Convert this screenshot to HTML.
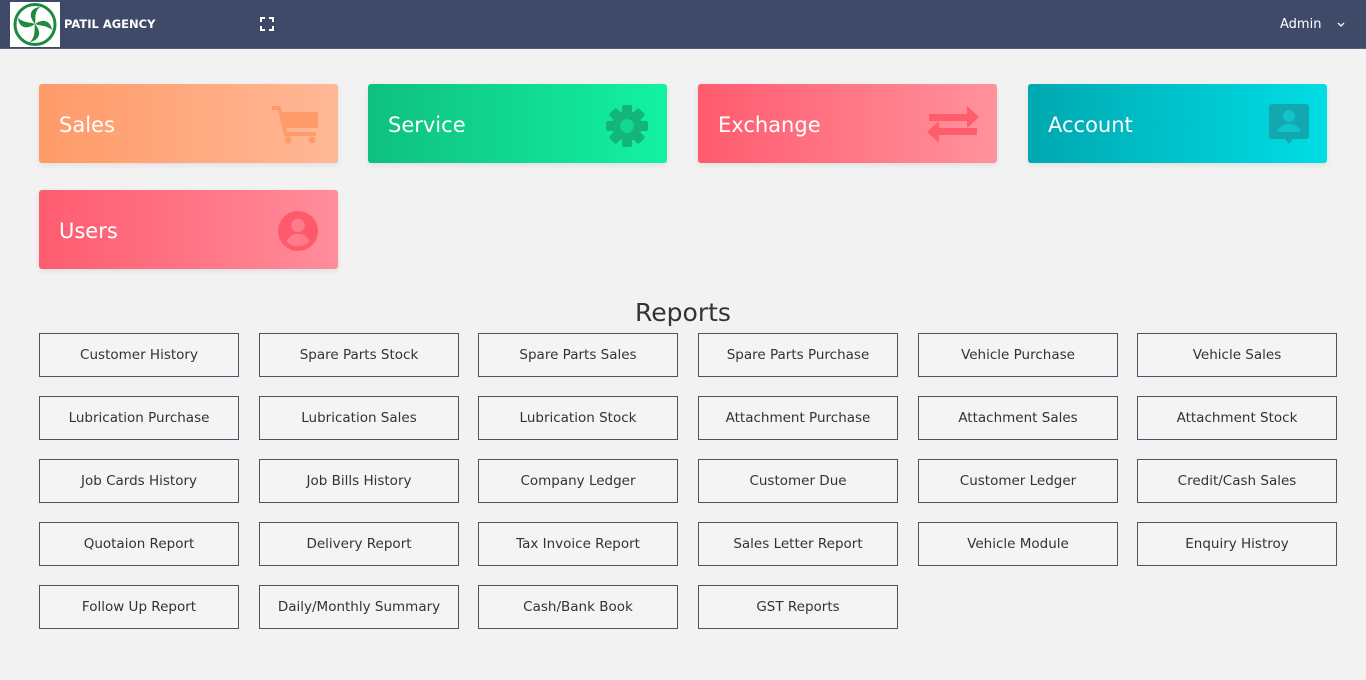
<!DOCTYPE html>
<html><head><meta charset="utf-8"><style>
*{box-sizing:border-box;margin:0;padding:0}
body{width:1366px;height:680px;background:#f2f2f2;font-family:"DejaVu Sans","Liberation Sans",sans-serif;position:relative;overflow:hidden}
.hdr{position:absolute;left:0;top:0;width:1366px;height:49px;background:#3e4a67;border-bottom:1px solid #56617a}
.logo{position:absolute;left:10px;top:2px;width:50px;height:45px;background:#fff}
.brand{position:absolute;left:64px;top:17px;color:#fff;font-weight:bold;font-size:11.5px;font-family:"DejaVu Sans",sans-serif}
.admin{position:absolute;left:1280px;top:17px;color:#fff;font-size:13px}
.card{position:absolute;width:299px;height:79px;border-radius:3px;color:#fff;font-size:21px;padding:29px 0 0 20px;box-shadow:0 2px 6px rgba(0,0,0,.08)}
.card svg{position:absolute;right:18px;top:20px}
.title{position:absolute;left:0;width:1366px;top:298px;text-align:center;font-size:25px;color:#333}
.b{position:absolute;width:200px;height:44px;border:1px solid #4a5468;background:#f4f4f4;color:#333;font-size:13.5px;text-align:center;line-height:42px}
</style></head><body>
<div class="hdr">
<div class="logo"><svg width="50" height="45" viewBox="0 0 50 45"><circle cx="25" cy="22.5" r="20" fill="#fff" stroke="#1e8a3e" stroke-width="3"/><g fill="#1e8a3e"><path d="M25 22 C18 14 20 6 30 5 C24 10 26 16 25 22Z"/><path d="M25 22 C33 16 41 19 42 28 C36 23 30 24 25 22Z"/><path d="M25 22 C32 30 30 38 20 40 C26 34 24 28 25 22Z"/><path d="M25 22 C17 28 9 26 8 16 C14 21 20 20 25 22Z"/></g></svg></div>
<div class="brand">PATIL AGENCY</div>
<svg style="position:absolute;left:260px;top:17px" width="14" height="14" viewBox="0 0 14 14" fill="none" stroke="#fff" stroke-width="2"><path d="M1 5V1H5M9 1H13V5M13 9V13H9M5 13H1V9"/></svg>
<div class="admin">Admin</div>
<svg style="position:absolute;left:1337px;top:22px" width="8" height="6" viewBox="0 0 8 6" fill="none" stroke="#fff" stroke-width="1.3"><path d="M1 1L4 4L7 1"/></svg>
</div>

<div class="card" style="left:39px;top:84px;background:linear-gradient(90deg,#ff9a68,#ffb896)">Sales<svg width="48" height="40" viewBox="0 0 48 40" fill="#ff9a6a"><path d="M0 2h8l2 6h36v16H14l1 4h29v4H12L6 6H0z"/><circle cx="16" cy="36" r="3.5"/><circle cx="40" cy="36" r="3.5"/></svg></div>
<div class="card" style="left:368px;top:84px;background:linear-gradient(90deg,#0fc07f,#12f2a2)">Service<svg width="44" height="44" viewBox="0 0 44 44" fill="#13b579"><g transform="translate(22 22)"><rect x="-5" y="-21" width="10" height="42" rx="2"/><rect x="-5" y="-21" width="10" height="42" rx="2" transform="rotate(45)"/><rect x="-5" y="-21" width="10" height="42" rx="2" transform="rotate(90)"/><rect x="-5" y="-21" width="10" height="42" rx="2" transform="rotate(135)"/><circle r="15"/><circle r="7" fill="#10d890"/></g></svg></div>
<div class="card" style="left:698px;top:84px;background:linear-gradient(90deg,#ff5b6f,#ff929c)">Exchange<svg width="52" height="40" viewBox="0 0 52 40" fill="#ff5c6c"><path d="M2 10h38V2l12 11-12 11v-7H2z"/><path d="M50 24H12v-7L0 28l12 11v-8h38z"/></svg></div>
<div class="card" style="left:1028px;top:84px;background:linear-gradient(90deg,#00a8b0,#00dde5)">Account<svg width="40" height="42" viewBox="0 0 40 42" fill="#13a8b0"><path d="M3 0h34a3 3 0 013 3v29a3 3 0 01-3 3H24l-4 5-4-5H3a3 3 0 01-3-3V3a3 3 0 013-3z"/><circle cx="20" cy="12" r="6" fill="#10c4cc"/><path d="M8 28c2-6 7-8 12-8s10 2 12 8z" fill="#10c4cc"/></svg></div>
<div class="card" style="left:39px;top:190px;background:linear-gradient(90deg,#ff5b6f,#ff8d9b)">Users<svg width="44" height="42" viewBox="0 0 44 44" fill="#ff5a6c"><circle cx="22" cy="22" r="21"/><circle cx="22" cy="16" r="7" fill="#ff7d8a"/><path d="M10 33c3-6 7-8 12-8s9 2 12 8c-3 3-7 5-12 5s-9-2-12-5z" fill="#ff7d8a"/></svg></div>

<div class="title">Reports</div>

<div class="b" style="left:39px;top:333px">Customer History</div>
<div class="b" style="left:259px;top:333px">Spare Parts Stock</div>
<div class="b" style="left:478px;top:333px">Spare Parts Sales</div>
<div class="b" style="left:698px;top:333px">Spare Parts Purchase</div>
<div class="b" style="left:918px;top:333px">Vehicle Purchase</div>
<div class="b" style="left:1137px;top:333px">Vehicle Sales</div>

<div class="b" style="left:39px;top:396px">Lubrication Purchase</div>
<div class="b" style="left:259px;top:396px">Lubrication Sales</div>
<div class="b" style="left:478px;top:396px">Lubrication Stock</div>
<div class="b" style="left:698px;top:396px">Attachment Purchase</div>
<div class="b" style="left:918px;top:396px">Attachment Sales</div>
<div class="b" style="left:1137px;top:396px">Attachment Stock</div>

<div class="b" style="left:39px;top:459px">Job Cards History</div>
<div class="b" style="left:259px;top:459px">Job Bills History</div>
<div class="b" style="left:478px;top:459px">Company Ledger</div>
<div class="b" style="left:698px;top:459px">Customer Due</div>
<div class="b" style="left:918px;top:459px">Customer Ledger</div>
<div class="b" style="left:1137px;top:459px">Credit/Cash Sales</div>

<div class="b" style="left:39px;top:522px">Quotaion Report</div>
<div class="b" style="left:259px;top:522px">Delivery Report</div>
<div class="b" style="left:478px;top:522px">Tax Invoice Report</div>
<div class="b" style="left:698px;top:522px">Sales Letter Report</div>
<div class="b" style="left:918px;top:522px">Vehicle Module</div>
<div class="b" style="left:1137px;top:522px">Enquiry Histroy</div>

<div class="b" style="left:39px;top:585px">Follow Up Report</div>
<div class="b" style="left:259px;top:585px">Daily/Monthly Summary</div>
<div class="b" style="left:478px;top:585px">Cash/Bank Book</div>
<div class="b" style="left:698px;top:585px">GST Reports</div>
</body></html>
